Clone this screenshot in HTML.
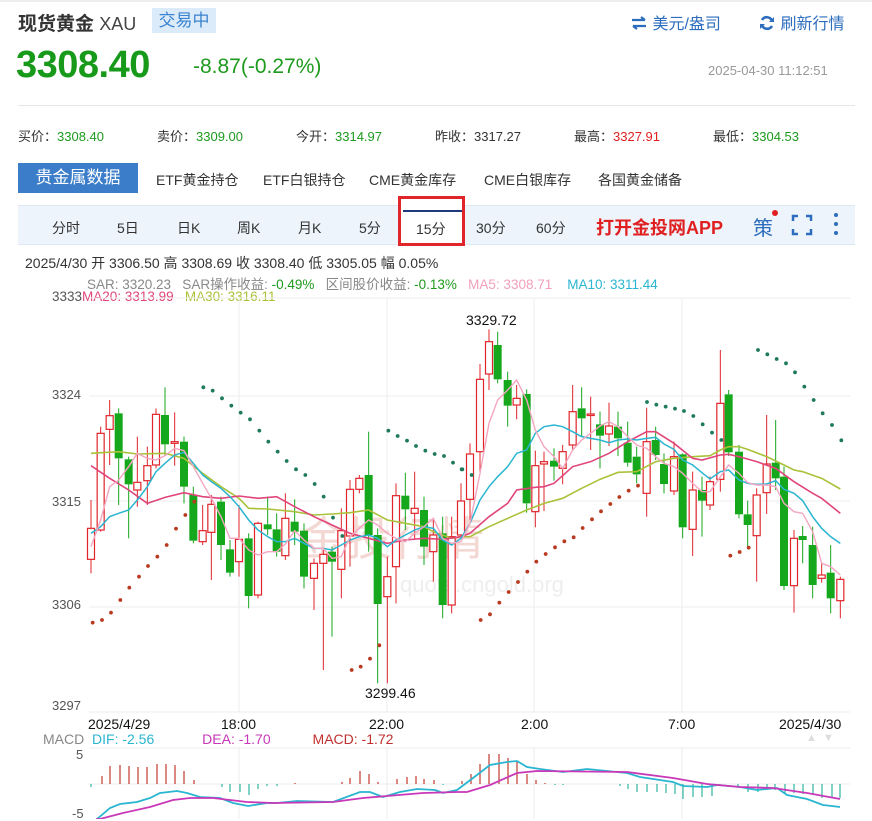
<!DOCTYPE html>
<html><head><meta charset="utf-8">
<style>
*{margin:0;padding:0;box-sizing:border-box}
body{width:872px;height:819px;overflow:hidden;background:#fff;font-family:"Liberation Sans","Noto Sans CJK SC",sans-serif;color:#333;position:relative}
.a{position:absolute;white-space:nowrap}
.g{color:#1e9a1e}.r{color:#e02020}
</style></head><body>
<div class="a" style="left:0;top:0;width:872px;height:2px;background:#eee"></div>
<div class="a" style="left:18px;top:9px;font-size:19px;font-weight:bold;color:#333">现货黄金 <span style="font-weight:normal;color:#444;font-size:18px">XAU</span></div>
<div class="a" style="left:152px;top:8px;width:64px;height:25px;background:#dcebf9;color:#3a84d0;font-size:17px;text-align:center;line-height:25px">交易中</div>
<div class="a" style="left:630px;top:10px;font-size:16px;color:#2c6dbd"><svg width="18" height="14" viewBox="0 0 18 14" style="vertical-align:-1px"><path d="M2 4h13M11 1l4 3M16 10H3M7 13l-4-3" stroke="#2c6dbd" stroke-width="2.2" fill="none"/></svg> 美元/盎司</div>
<div class="a" style="left:758px;top:10px;font-size:16px;color:#2c6dbd"><svg width="18" height="18" viewBox="0 0 18 18" style="vertical-align:-3px"><path d="M14 7A5.5 5.5 0 0 0 4 6M4 11a5.5 5.5 0 0 0 10 1" stroke="#2c6dbd" stroke-width="2.6" fill="none"/><path d="M16 3v5h-5zM2 15v-5h5z" fill="#2c6dbd"/></svg> 刷新行情</div>
<div class="a g" style="left:16px;top:44px;font-size:38px;font-weight:bold;color:#17991a;letter-spacing:-0.5px">3308.40</div>
<div class="a g" style="left:193px;top:55px;font-size:21px">-8.87(-0.27%)</div>
<div class="a" style="left:708px;top:63px;font-size:13px;color:#999">2025-04-30 11:12:51</div>
<div class="a" style="left:18px;top:105px;width:837px;height:1px;background:#e6e6e6"></div>
<div class="a" style="left:18px;top:126px;font-size:13px">买价：<span class="g">3308.40</span></div>
<div class="a" style="left:157px;top:126px;font-size:13px">卖价：<span class="g">3309.00</span></div>
<div class="a" style="left:296px;top:126px;font-size:13px">今开：<span class="g">3314.97</span></div>
<div class="a" style="left:435px;top:126px;font-size:13px">昨收：<span>3317.27</span></div>
<div class="a" style="left:574px;top:126px;font-size:13px">最高：<span class="r">3327.91</span></div>
<div class="a" style="left:713px;top:126px;font-size:13px">最低：<span class="g">3304.53</span></div>
<div class="a" style="left:18px;top:163px;width:120px;height:30px;background:#3b7dc9;color:#fff;font-size:17px;line-height:30px;text-align:center">贵金属数据</div>
<div class="a" style="left:156px;top:170px;font-size:14px">ETF黄金持仓</div>
<div class="a" style="left:263px;top:170px;font-size:14px">ETF白银持仓</div>
<div class="a" style="left:369px;top:170px;font-size:14px">CME黄金库存</div>
<div class="a" style="left:484px;top:170px;font-size:14px">CME白银库存</div>
<div class="a" style="left:598px;top:170px;font-size:14px">各国黄金储备</div>
<div class="a" style="left:18px;top:205px;width:837px;height:40px;background:#eef4fb;border-top:1px solid #dfe8f2;border-bottom:1px solid #dfe8f2"></div>
<div class="a" style="left:52px;top:218px;font-size:14px">分时</div>
<div class="a" style="left:117px;top:218px;font-size:14px">5日</div>
<div class="a" style="left:177px;top:218px;font-size:14px">日K</div>
<div class="a" style="left:237px;top:218px;font-size:14px">周K</div>
<div class="a" style="left:298px;top:218px;font-size:14px">月K</div>
<div class="a" style="left:359px;top:218px;font-size:14px">5分</div>
<div class="a" style="left:398px;top:196px;width:67px;height:50px;border:3px solid #e0262a;background:#fff"></div>
<div class="a" style="left:403px;top:210px;width:59px;height:2px;background:#1f3a7a"></div>
<div class="a" style="left:416px;top:219px;font-size:14px">15分</div>
<div class="a" style="left:476px;top:218px;font-size:14px">30分</div>
<div class="a" style="left:536px;top:218px;font-size:14px">60分</div>
<div class="a" style="left:596px;top:214px;font-size:18px;font-weight:bold;color:#e02020">打开金投网APP</div>
<div class="a" style="left:753px;top:212px;font-size:20px;color:#2c6dbd">策</div>
<div class="a" style="left:772px;top:210px;width:6px;height:6px;border-radius:3px;background:#e02020"></div>
<svg class="a" style="left:791px;top:214px" width="22" height="22" viewBox="0 0 22 22"><path d="M2 7V2h5M15 2h5v5M20 15v5h-5M7 20H2v-5" stroke="#2c6dbd" stroke-width="2.5" fill="none"/></svg>
<svg class="a" style="left:832px;top:212px" width="8" height="24"><circle cx="4" cy="3" r="2" fill="#2c6dbd"/><circle cx="4" cy="12" r="2" fill="#2c6dbd"/><circle cx="4" cy="21" r="2" fill="#2c6dbd"/></svg>
<div class="a" style="left:25px;top:253px;font-size:14px;color:#333">2025/4/30 开 3306.50 高 3308.69 收 3308.40 低 3305.05 幅 0.05%</div>
<div class="a" style="left:87px;top:273px;font-size:13.5px;color:#888">SAR: 3320.23 &nbsp;&nbsp;SAR操作收益: <span style="color:#1e9a1e">-0.49%</span> &nbsp;&nbsp;区间股价收益: <span style="color:#1e9a1e">-0.13%</span> &nbsp;&nbsp;<span style="color:#f0a0bc">MA5: 3308.71</span> &nbsp;&nbsp;&nbsp;<span style="color:#2ab5d0">MA10: 3311.44</span></div>
<div class="a" style="left:52px;top:289px;font-size:13.5px;color:#555">3333<span style="color:#e0457b">MA20: 3313.99</span> &nbsp;&nbsp;<span style="color:#a9c23a">MA30: 3316.11</span></div>
<div class="a" style="left:52px;top:387px;font-size:13px;color:#555">3324</div>
<div class="a" style="left:52px;top:494px;font-size:13px;color:#555">3315</div>
<div class="a" style="left:52px;top:597px;font-size:13px;color:#555">3306</div>
<div class="a" style="left:52px;top:698px;font-size:13px;color:#555">3297</div>
<div class="a" style="left:88px;top:716px;font-size:14px;color:#111">2025/4/29</div>
<div class="a" style="left:221px;top:716px;font-size:14px;color:#111">18:00</div>
<div class="a" style="left:369px;top:716px;font-size:14px;color:#111">22:00</div>
<div class="a" style="left:521px;top:716px;font-size:14px;color:#111">2:00</div>
<div class="a" style="left:668px;top:716px;font-size:14px;color:#111">7:00</div>
<div class="a" style="left:779px;top:716px;font-size:14px;color:#111">2025/4/30</div>
<div class="a" style="left:43px;top:731px;font-size:14px;color:#888">MACD <span style="color:#2ab5d0">&nbsp;DIF: -2.56</span> <span style="color:#c838b8;margin-left:44px">DEA: -1.70</span> <span style="color:#c03030;margin-left:38px">MACD: -1.72</span></div>
<div class="a" style="left:806px;top:732px;font-size:11px;color:#ddd">▲ &nbsp;▼</div>
<div class="a" style="left:76px;top:747px;font-size:13px;color:#555">5</div>
<div class="a" style="left:72px;top:806px;font-size:13px;color:#555">-5</div>
<svg id="ch" class="a" style="left:0;top:0" width="872" height="819"></svg>
<script>
var s='';
function L(x1,y1,x2,y2,c,w){s+='<line x1="'+x1+'" y1="'+y1+'" x2="'+x2+'" y2="'+y2+'" stroke="'+c+'" stroke-width="'+(w||1)+'"/>';}
[298,396,501,607,712].forEach(function(y){L(89,y,850,y,'#eee');});
[239,387,534,682].forEach(function(x){L(x,298,x,712,'#eee');L(x,748,x,819,'#eee');});
L(89,748,850,748,'#eee');
s+='<text x="300" y="555" font-size="46" fill="#f3d8d4" font-family="Noto Sans CJK SC,sans-serif">金投行情</text><text x="400" y="592" font-size="22" fill="#eee" font-family="Liberation Sans">quote.cngold.org</text>';
var A=[['R',715,808,630,850,33],['R',430,720,410,725,62],['R',377,418,330,525,89],['G',370,505,355,645,116],['G',508,583,500,745,146],['R',577,600,440,650,172],['R',527,572,470,645,202],['R',373,525,355,535,228],['G',375,463,292,495,255],['R',455,460,367,527,284],['G',455,590,440,640,312],['G',615,752,590,760,340],['R',722,755,645,765,368],['R',643,727,615,870,394],['G',635,765,620,810,423],['G',778,848,750,860,450],['R',748,815,645,860,477],['G',745,918,730,955,506],['R',700,915,695,925,534],['G',703,718,620,735,563],['G',718,785,670,800,590],['R',685,797,610,810,616],['G',695,725,628,765,644],['G',722,860,700,895,672],['R',820,865,805,960,702],['R',793,820,780,1140,730],['G',785,815,770,1040,756],['R',722,838,655,925,784],['R',598,738,570,830,810],['R',565,598,555,610,838],['G',555,735,425,785,866],['G',735,942,715,1180,893],['R',860,920,800,1180,922],['R',617,830,580,940,948],['G',617,658,548,720,976],['R',655,670,545,750,1004],['G',660,770,620,825,1032],['R',735,785,690,875,1060],['G',730,945,680,985,1088],['R',740,945,680,970,1115],['R',633,735,580,745,1143]];
var B=[['R',492,628,460,690,30],['R',268,485,222,545,60],['R',155,252,118,300,87],['G',165,268,125,280,113],['G',270,347,245,410,143],['R',325,345,285,388,170],['G',312,640,298,668,200],['R',527,665,482,712,226],['R',515,522,485,663,252],['G',512,530,475,572,282],['R',485,535,465,583,308],['R',365,465,285,480,338],['G',355,385,292,440,365],['R',372,374,320,480,392],['G',403,437,365,535,420],['R',408,432,338,468,447],['G',410,445,365,498,474],['G',458,518,395,530,503],['G',500,553,470,580,530],['R',455,610,353,680,560],['G',450,495,410,510,587],['G',522,582,490,610,612],['R',500,603,455,615,642],['G',493,712,490,745,668],['R',600,718,545,798,698],['G',600,632,560,740,726],['R',575,645,560,660,750],['R',340,568,180,605,781],['G',313,487,300,498,806],['G',485,673,465,685,837],['G',673,705,632,770,863],['R',615,737,595,875,890],['R',522,608,375,672,920],['G',518,565,390,600,947],['G',560,888,530,900,972],['R',745,887,720,968,1002],['G',738,750,708,820,1028],['G',765,885,710,925,1058],['R',855,865,820,878,1085],['G',848,925,765,970,1112],['R',868,932,860,985,1141]];
function cd(arr,ox){arr.forEach(function(c){var x=ox+c[5]/3,t=290+c[1]/3,b=290+c[2]/3,h=290+c[3]/3,l=290+c[4]/3;var col=c[0]=='R'?'#e0242a':'#16a81c';
L(x,h,x,t,col);L(x,b,x,l,col);var hh=Math.max(b-t,1.5);
if(c[0]=='R')s+='<rect x="'+(x-3.5)+'" y="'+t+'" width="7" height="'+hh+'" fill="#fff" stroke="'+col+'" stroke-width="1.2"/>';
else s+='<rect x="'+(x-4)+'" y="'+t+'" width="8" height="'+hh+'" fill="'+col+'"/>';});}
function pl(a,ox,b,oxb,c,w){var p=[];for(var i=0;i<a.length;i+=2)p.push((ox+a[i]/3)+','+(290+a[i+1]/3));for(i=0;i<b.length;i+=2)p.push((oxb+b[i]/3)+','+(290+b[i+1]/3));s+='<polyline points="'+p.join(' ')+'" fill="none" stroke="'+c+'" stroke-width="'+(w||1.5)+'"/>';}
var ma30a=[33,490,116,485,172,492,255,490,312,505,368,550,423,590,477,625,506,655,563,657,644,665,702,675,756,672,810,668,866,660,922,690,976,700,1032,710,1060,725,1115,745,1143,740],ma30b=[30,740,87,710,143,685,200,660,252,640,308,625,365,595,420,568,474,547,530,545,587,515,642,505,698,500,750,497,781,480,806,470,837,470,863,478,920,500,972,525,1002,540,1028,545,1085,565,1141,597];
var ma20a=[33,527,89,565,146,600,202,640,255,622,312,608,368,620,423,625,477,618,534,625,590,620,644,650,702,680,756,705,810,730,866,745,922,760,976,750,1032,745,1088,748,1143,740],ma20b=[30,730,87,680,143,640,170,600,226,592,252,590,282,580,338,530,392,515,447,490,503,455,560,425,587,425,642,460,698,505,726,510,781,495,806,493,837,500,890,515,947,535,1002,575,1058,610,1085,625,1141,670];
var ma10a=[33,730,62,710,89,680,116,670,146,660,172,630,202,590,228,545,255,520,284,495,312,487,340,520,368,555,394,575,423,595,450,620,477,650,506,690,534,720,563,740,590,755,616,755,644,745,672,760,702,775,730,775,756,780,784,765,810,750,838,740,866,735,893,745,922,770,948,750,976,735,1004,720,1032,710,1060,715,1088,750,1115,765,1143,745],ma10b=[30,700,60,630,87,590,113,560,143,530,170,490,200,480,226,430,252,410,282,405,308,410,338,425,365,440,392,445,420,450,447,458,474,450,503,447,530,450,560,445,587,442,612,462,642,478,668,510,698,525,726,548,750,567,781,545,806,540,837,570,863,580,890,583,920,582,947,572,972,598,1002,610,1028,632,1058,680,1085,715,1112,740,1141,760];
var ma5a=[33,770,62,690,89,590,116,570,146,530,172,490,202,505,228,510,255,497,284,475,312,482,340,530,368,580,394,625,423,680,450,745,477,745,506,780,534,795,563,785,590,785,616,762,644,722,672,750,702,775,730,775,756,805,784,800,810,740,838,715,866,690,893,705,922,730,948,745,976,755,1004,730,1032,710,1060,685,1088,745,1115,760,1143,755],ma5b=[30,700,60,550,87,400,113,330,143,300,170,270,200,330,226,420,252,470,282,500,308,535,338,480,365,450,392,430,420,408,447,395,474,410,503,440,530,465,560,475,587,500,612,520,642,530,668,550,698,580,726,605,750,605,781,560,806,525,837,550,863,578,890,585,920,585,947,590,972,640,1002,665,1028,670,1058,725,1085,820,1112,830,1141,855];
cd(A,80);cd(B,460);
pl(ma30a,80,ma30b,460,'#a9c23a',1.6);pl(ma20a,80,ma20b,460,'#e0457b',1.6);pl(ma10a,80,ma10b,460,'#2ab5d0',1.5);pl(ma5a,80,ma5b,460,'#f3a6c0',1.4);
var red='#b83a20',grn='#1e7a5a';
function dots(a,ox,c){for(var i=0;i<a.length;i+=2)s+='<circle cx="'+(ox+a[i]/3)+'" cy="'+(290+a[i+1]/3)+'" r="1.9" fill="'+c+'"/>';}
dots([38,998,66,990,93,968,121,930,148,893,177,860,204,828,232,800,260,765,288,716,316,675,343,635,815,1140,842,1130,870,1106,898,1066],80,red);
dots([370,292,398,302,426,325,454,347,482,368,510,388,538,422,565,455,593,485,620,513,648,538,676,555,704,582,731,620,759,683,787,738,925,422,953,438,981,452,1008,468,1036,482,1064,492,1092,498,1119,518,1147,538],80,grn);
dots([5,538,35,555,561,336,589,344,617,350,645,356,672,363,700,378,728,403,756,428,784,450,894,180,922,193,950,207,978,220,1005,247,1033,290,1061,330,1088,370,1116,405,1144,451],460,grn);
dots([62,990,90,973,118,938,146,906,174,876,202,845,229,815,257,792,285,772,313,754,341,742,368,714,396,688,423,664,451,642,478,621,506,602,534,587,811,797,839,786,866,773],460,red);
s+='<text x="466" y="325" font-size="14" fill="#111" font-family="Liberation Sans">3329.72</text><text x="365" y="698" font-size="14" fill="#111" font-family="Liberation Sans">3299.46</text>';
var z=784;L(89,z,850,z,'#eee');
var bars=[[102,8],[110,18],[120,19],[129,18],[138,17],[147,17],[157,20],[166,20],[175,19],[184,13],[194,4],[295,1],[342,2],[350,6],[360,13],[369,10],[378,2],[397,5],[407,7],[416,8],[424,5],[434,4],[462,3],[471,10],[480,20],[489,30],[499,30],[508,26],[517,22],[527,10],[536,4],[545,1],
[91,-3],[222,-3],[230,-8],[240,-8],[249,-11],[258,-5],[267,-2],[277,-2],[443,-1],[555,-1],[563,-1],[620,-2],[628,-5],[637,-8],[647,-8],[657,-8],[666,-9],[675,-10],[683,-15],[693,-13],[702,-13],[712,-12],[720,-1],[738,-3],[748,-8],[758,-8],[767,-6],[775,-6],[785,-10],[794,-9],[803,-10],[813,-11],[822,-14],[832,-14],[840,-14]];
bars.forEach(function(b){L(b[0],z,b[0],z-b[1],b[1]>0?'#c0392b':'#2bb5a0',1.2);});
s+='<polyline points="97,819 110,808 120,804 137,802 150,798 160,793 177,791 187,793 200,797 220,798 233,803 248,806 267,803 277,803 297,801 333,802 360,792 370,792 383,797 400,792 417,789 435,790 443,793 457,790 473,778 490,765 507,762 517,761 527,767 540,769 563,772 587,769 607,771 627,773 640,777 673,782 683,786 707,787 717,785 740,787 757,790 777,788 787,795 807,799 823,805 840,807" fill="none" stroke="#2ab5d0" stroke-width="1.8"/>';
s+='<polyline points="96,819 100,819 123,813 150,807 173,800 190,798 213,798 247,802 273,803 333,802 363,798 387,796 423,793 457,792 467,792 490,785 517,773 537,771 627,772 673,778 707,784 740,787 773,788 807,793 840,799" fill="none" stroke="#c838b8" stroke-width="1.8"/>';
document.getElementById('ch').innerHTML=s;
</script>
</body></html>
